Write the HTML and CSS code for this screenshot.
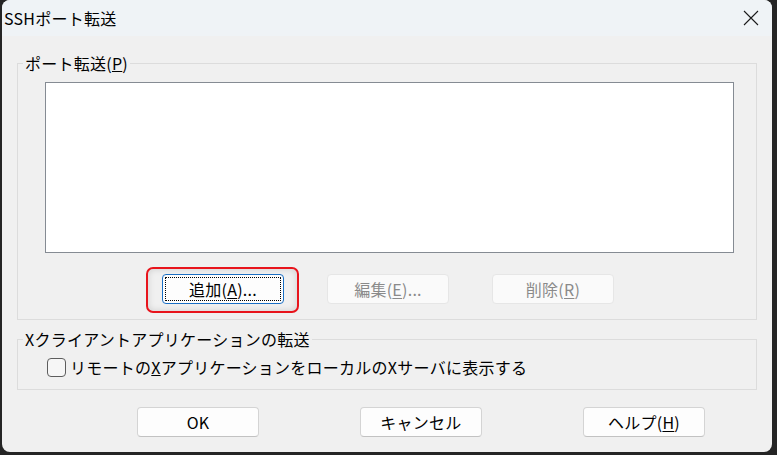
FILE: index.html
```html
<!DOCTYPE html>
<html lang="ja">
<head>
  <meta charset="UTF-8">
  <title>SSHポート転送</title>
  <link rel="stylesheet" href="styles.css">
</head>
<body>

<div class="window">
  <!-- Title bar -->
  <div class="titlebar">
    <span class="title">SSHポート転送</span>
    <svg class="close-icon" width="16" height="16" viewBox="0 0 16 16">
      <path d="M1 1 L15 15 M15 1 L1 15" stroke="#1a1a1a" stroke-width="1.1" fill="none"/>
    </svg>
  </div>

  <div class="content">
    <!-- Port forwarding list -->
    <fieldset class="group group-forward">
      <legend>ポート転送(<u>P</u>)</legend>
      <div class="listbox"></div>
      <div class="list-buttons">
        <span class="highlight-wrap">
          <button class="btn btn-default">追加(<u>A</u>)...</button>
          <span class="highlight"></span>
        </span>
        <button class="btn" disabled>編集(<u>E</u>)...</button>
        <button class="btn" disabled>削除(<u>R</u>)</button>
      </div>
    </fieldset>

    <!-- X11 forwarding -->
    <fieldset class="group group-x11">
      <legend>Xクライアントアプリケーションの転送</legend>
      <label class="check">
        <input type="checkbox">
        <span>リモートの<u>X</u>アプリケーションをローカルのXサーバに表示する</span>
      </label>
    </fieldset>

    <div class="dialog-buttons">
      <button class="btn">OK</button>
      <button class="btn">キャンセル</button>
      <button class="btn">ヘルプ(<u>H</u>)</button>
    </div>
  </div>
</div>

</body>
</html>
```

FILE: styles.css
```css
* { box-sizing: border-box; }

body {
  margin: 0;
  background: #252525;
  font-family: "Noto Sans CJK JP", "Noto Sans", sans-serif;
  font-size: 16px;
  letter-spacing: 0.25px;
  color: #000;
}

.window {
  margin-left: 2px;
  width: 770px;
  height: 452px;
  background: #f0f0f0;
  border-radius: 8px;
  overflow: hidden;
}

.titlebar {
  height: 36px;
  background: #eff3f6;
  display: flex;
  align-items: center;
  justify-content: space-between;
  padding-left: 2px;
  padding-right: 13px;
}

.title {
  line-height: 20px;
}

.close-icon {
  display: block;
}

.content {
  padding: 0 15px;
}

.group {
  margin: 0;
  padding: 0;
  min-width: 0;
  border: 1px solid #dcdcdc;
}

.group legend {
  margin-left: 5px;
  padding: 0 2px;
  line-height: 18px;
}

.group-forward {
  margin-top: 18px;
  padding-bottom: 15px;
}

.listbox {
  margin: 10px 0 0 27px;
  width: 689px;
  height: 171px;
  background: #fff;
  border: 1px solid #858b93;
}

.list-buttons {
  display: flex;
  gap: 43px;
  margin: 21px 0 0 144px;
}

.btn {
  width: 122px;
  height: 30px;
  padding: 0;
  font-family: inherit;
  font-size: 16px;
  letter-spacing: 0.25px;
  line-height: 20px;
  color: #000;
  background: #fdfdfd;
  border: 1px solid #d4d4d4;
  border-bottom-color: #c2c2c2;
  border-radius: 4px;
}

.btn u {
  text-underline-offset: 2px;
}

.btn-default {
  border-color: #1a6fc4;
  outline: 1px dotted #000;
  outline-offset: -4px;
}

.btn:disabled {
  background: #fafafa;
  border-color: #e6e6e6;
  color: #8a8a8a;
}

.highlight-wrap {
  position: relative;
  display: block;
}

.highlight-wrap .btn {
  display: block;
}

.highlight {
  position: absolute;
  top: -7px;
  left: -16px;
  right: -15px;
  bottom: -9px;
  border: 2px solid #e8141c;
  border-radius: 7px;
  box-shadow: inset 0 0 7px rgba(0, 0, 0, 0.14);
  pointer-events: none;
}

.group-x11 {
  margin-top: 10px;
  padding-bottom: 12px;
}

.check {
  display: flex;
  align-items: center;
  gap: 4px;
  margin: 9px 0 0 29px;
  line-height: 20px;
}

.check input {
  appearance: none;
  margin: 0;
  width: 19px;
  height: 19px;
  border: 1px solid #5d5d5d;
  border-radius: 4px;
  background: #f6f6f6;
}

.dialog-buttons {
  display: flex;
  gap: 101px;
  margin: 17px 0 0 120px;
}
```
